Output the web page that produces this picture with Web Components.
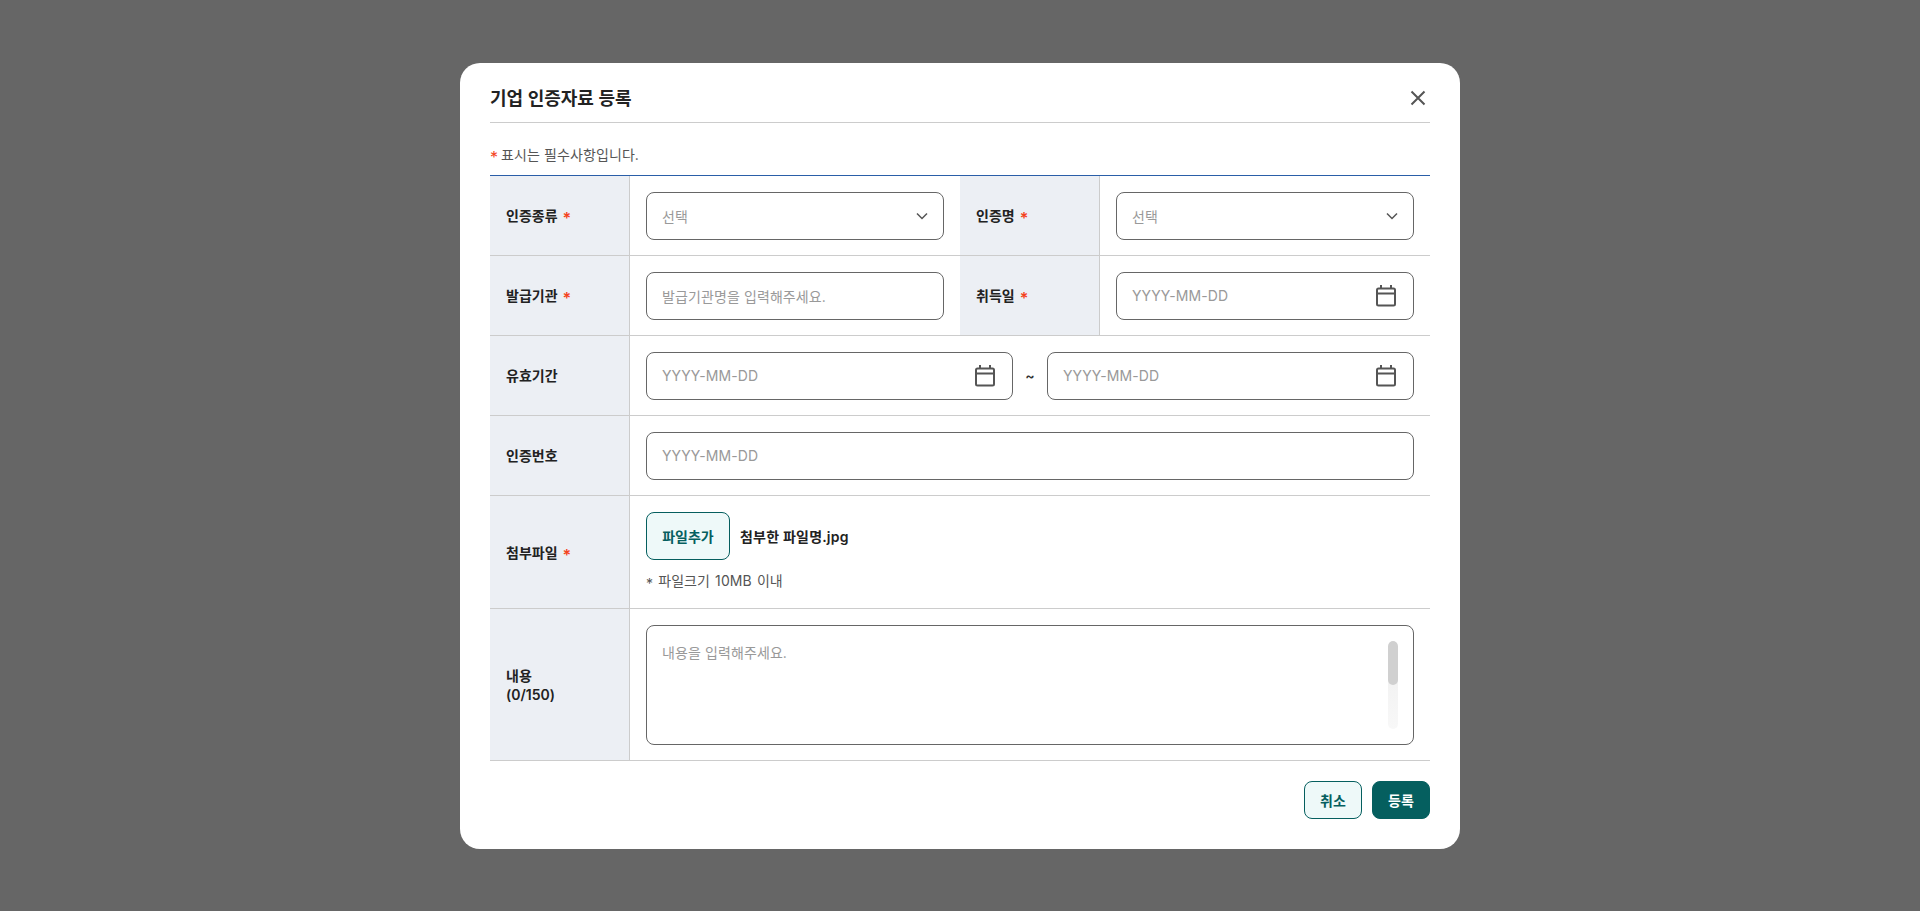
<!DOCTYPE html>
<html lang="ko">
<head>
<meta charset="utf-8">
<title>기업 인증자료 등록</title>
<style>
  html, body { height: 100%; }
  body {
    margin: 0;
    background: #666;
    font-family: Inter, "Noto Sans CJK KR", sans-serif;
    overflow: hidden;
  }
</style>
</head>
<body>
<cert-modal>
  <span slot="title">기업 인증자료 등록</span>
  <form-row>
    <form-label required>인증종류</form-label>
    <form-cell><text-box icon="chevron" hint="선택"></text-box></form-cell>
    <form-label required>인증명</form-label>
    <form-cell><text-box icon="chevron" hint="선택"></text-box></form-cell>
  </form-row>
  <form-row>
    <form-label required>발급기관</form-label>
    <form-cell><text-box hint="발급기관명을 입력해주세요."></text-box></form-cell>
    <form-label required>취득일</form-label>
    <form-cell><text-box icon="calendar" hint="YYYY-MM-DD"></text-box></form-cell>
  </form-row>
  <form-row>
    <form-label>유효기간</form-label>
    <form-cell wide>
      <date-range></date-range>
    </form-cell>
  </form-row>
  <form-row>
    <form-label>인증번호</form-label>
    <form-cell wide><text-box hint="YYYY-MM-DD"></text-box></form-cell>
  </form-row>
  <form-row auto>
    <form-label required>첨부파일</form-label>
    <form-cell wide><file-field></file-field></form-cell>
  </form-row>
  <form-row auto>
    <form-label>내용<br>(0/150)</form-label>
    <form-cell wide><memo-box hint="내용을 입력해주세요."></memo-box></form-cell>
  </form-row>
  <action-button slot="actions" variant="line">취소</action-button>
  <action-button slot="actions" variant="solid">등록</action-button>
</cert-modal>

<script>
class CertModal extends HTMLElement {
  constructor () {
    super()
    this.shadow = this.attachShadow({ mode: 'open' })
  }

  connectedCallback () {
    this.shadow.innerHTML =
      /* html */`
      <style>
        *{ box-sizing: border-box; }
        :host {
          display: flex;
          height: 100%;
          align-items: center;
          justify-content: center;
        }
        .modal {
          width: 1000px;
          height: 786px;
          background: #fff;
          border-radius: 20px;
          padding: 0 30px;
          display: flex;
          flex-direction: column;
        }
        .head {
          height: 60px;
          display: flex;
          align-items: center;
          justify-content: space-between;
          border-bottom: 1px solid #ccc;
          padding-top: 9px;
          font-size: 18px;
          font-weight: 600;
          color: #222;
        }
        .head svg { display: block; margin: 2px 3px 0 0; }
        .note {
          height: 52px;
          padding-top: 20px;
          font-size: 14px;
          line-height: 24px;
          letter-spacing: .1px;
          color: #555;
        }
        .note b { display: inline-block; width: 7px; color: #f4431c; font-size: 16px; line-height: 16px; font-weight: 400; transform: translateY(3px); }
        .table { border-top: 1px solid #2a5ea8; }
        .actions {
          display: flex;
          justify-content: flex-end;
          gap: 10px;
          padding-top: 20px;
        }
      </style>
      <div class="modal">
        <div class="head">
          <slot name="title"></slot>
          <svg width="18" height="18" viewBox="0 0 18 18" fill="none" stroke="#555" stroke-width="2"><path d="M2.5 2.5l13 13M15.5 2.5l-13 13"/></svg>
        </div>
        <div class="note"><b>*</b> 표시는 필수사항입니다.</div>
        <div class="table"><slot></slot></div>
        <div class="actions"><slot name="actions"></slot></div>
      </div>
      `
  }
}

class FormRow extends HTMLElement {
  constructor () {
    super()
    this.attachShadow({ mode: 'open' }).innerHTML =
      /* html */`
      <style>
        :host {
          display: grid;
          grid-template-columns: 140px 330px 140px 330px;
          box-sizing: border-box;
          height: 80px;
          border-bottom: 1px solid #ccc;
        }
        :host([auto]) { height: auto; }
      </style>
      <slot></slot>
      `
  }
}

class FormLabel extends HTMLElement {
  constructor () {
    super()
    this.attachShadow({ mode: 'open' }).innerHTML =
      /* html */`
      <style>
        :host {
          display: flex;
          align-items: center;
          gap: 5px;
          box-sizing: border-box;
          background: #eceff4;
          border-right: 1px solid #ccc;
          padding: 1px 0 0 16px;
          font-size: 14px;
          line-height: 19px;
          font-weight: 600;
          color: #222;
        }
        .star { display: none; color: #f4431c; font-weight: 600; font-size: 16px; transform: translateY(3px); }
        :host([required]) .star { display: inline; }
      </style>
      <div><slot></slot></div>
      <span class="star">*</span>
      `
  }
}

class FormCell extends HTMLElement {
  constructor () {
    super()
    this.attachShadow({ mode: 'open' }).innerHTML =
      /* html */`
      <style>
        :host {
          display: block;
          box-sizing: border-box;
          padding: 16px 16px 15px;
        }
        :host([wide]) { grid-column: span 3; }
      </style>
      <slot></slot>
      `
  }
}

const ICONS = {
  chevron: '<svg width="12" height="12" viewBox="0 0 12 12" fill="none" stroke="#555" stroke-width="1.5"><path d="M1 3.5l5 5 5-5"/></svg>',
  calendar: '<svg width="24" height="24" viewBox="0 0 24 24" fill="none" stroke="#555" stroke-width="2"><rect x="3" y="4.5" width="18" height="17" rx="1.5"/><path d="M3 9.5h18M7 1v3.5M17 1v3.5"/></svg>'
}

class TextBox extends HTMLElement {
  constructor () {
    super()
    this.shadow = this.attachShadow({ mode: 'open' })
  }

  connectedCallback () {
    const icon = ICONS[this.getAttribute('icon')] || ''
    this.shadow.innerHTML =
      /* html */`
      <style>
        :host {
          display: flex;
          align-items: center;
          justify-content: space-between;
          box-sizing: border-box;
          height: 48px;
          padding: 0 15px;
          background: #fff;
          border: 1px solid #666;
          border-radius: 8px;
          font-size: 14px;
          letter-spacing: .1px;
          color: #999;
        }
      </style>
      <span>${this.getAttribute('hint')}</span>
      ${icon}
      `
  }
}

class DateRange extends HTMLElement {
  constructor () {
    super()
    this.attachShadow({ mode: 'open' }).innerHTML =
      /* html */`
      <style>
        :host {
          display: grid;
          grid-template-columns: 1fr 34px 1fr;
          align-items: center;
        }
        span { text-align: center; font-size: 14px; font-weight: 600; color: #333; }
      </style>
      <text-box icon="calendar" hint="YYYY-MM-DD"></text-box>
      <span>~</span>
      <text-box icon="calendar" hint="YYYY-MM-DD"></text-box>
      `
  }
}

class FileField extends HTMLElement {
  constructor () {
    super()
    this.attachShadow({ mode: 'open' }).innerHTML =
      /* html */`
      <style>
        :host { display: block; }
        .line { display: flex; align-items: center; gap: 10px; }
        .pick {
          display: flex;
          align-items: center;
          justify-content: center;
          box-sizing: border-box;
          width: 84px;
          height: 48px;
          border: 1px solid #055f5f;
          border-radius: 8px;
          background: #eef9f9;
          color: #055f5f;
          font-size: 14px;
          font-weight: 600;
        }
        .name { font-size: 14px; font-weight: 600; letter-spacing: .2px; color: #222; }
        .size { margin-top: 9px; font-size: 14px; line-height: 24px; letter-spacing: .1px; word-spacing: 1px; color: #555; }
        .size b { display: inline-block; font-weight: 400; transform: translateY(3px); }
      </style>
      <div class="line">
        <div class="pick">파일추가</div>
        <div class="name">첨부한 파일명.jpg</div>
      </div>
      <div class="size"><b>*</b> 파일크기 10MB 이내</div>
      `
  }
}

class MemoBox extends HTMLElement {
  constructor () {
    super()
    this.shadow = this.attachShadow({ mode: 'open' })
  }

  connectedCallback () {
    this.shadow.innerHTML =
      /* html */`
      <style>
        :host {
          display: flex;
          justify-content: space-between;
          box-sizing: border-box;
          height: 120px;
          padding: 15px;
          border: 1px solid #666;
          border-radius: 8px;
          font-size: 14px;
          line-height: 24px;
          letter-spacing: .1px;
          color: #999;
        }
        .track {
          width: 10px;
          height: 88px;
          border-radius: 5px;
          background: linear-gradient(#eee, #f8f8f8);
          overflow: hidden;
        }
        .thumb { height: 44px; border-radius: 5px; background: #d0d0d0; }
      </style>
      <span>${this.getAttribute('hint')}</span>
      <div class="track"><div class="thumb"></div></div>
      `
  }
}

class ActionButton extends HTMLElement {
  constructor () {
    super()
    this.attachShadow({ mode: 'open' }).innerHTML =
      /* html */`
      <style>
        :host {
          display: flex;
          align-items: center;
          justify-content: center;
          box-sizing: border-box;
          width: 58px;
          height: 38px;
          border: 1px solid #055f5f;
          border-radius: 8px;
          font-size: 14px;
          font-weight: 600;
        }
        :host([variant="line"]) { background: #eef9f9; color: #055f5f; }
        :host([variant="solid"]) { background: #055f5f; color: #fff; }
      </style>
      <slot></slot>
      `
  }
}

customElements.define('cert-modal', CertModal)
customElements.define('form-row', FormRow)
customElements.define('form-label', FormLabel)
customElements.define('form-cell', FormCell)
customElements.define('text-box', TextBox)
customElements.define('date-range', DateRange)
customElements.define('file-field', FileField)
customElements.define('memo-box', MemoBox)
customElements.define('action-button', ActionButton)
</script>
</body>
</html>
